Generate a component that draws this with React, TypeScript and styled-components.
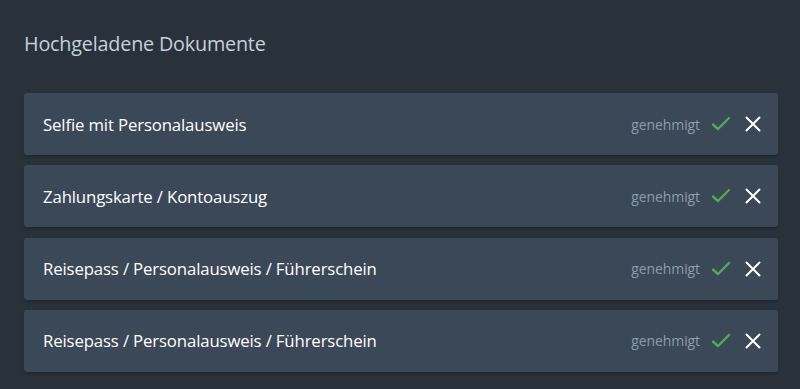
import React from "react";
import styled, { createGlobalStyle } from "styled-components";

const GlobalStyle = createGlobalStyle`
  html, body {
    margin: 0;
    padding: 0;
    background: #29313b;
  }
  body {
    font-family: "Open Sans", "Noto Sans", sans-serif;
  }
`;

const Page = styled.div`
  width: 800px;
  height: 389px;
  box-sizing: border-box;
  padding: 30px 22px 0 24px;
  background: #29313b;
`;

const Title = styled.h2`
  margin: 0 0 35px;
  font-weight: 400;
  font-size: 19.8px;
  line-height: 28px;
  color: #c5d0db;
  letter-spacing: -0.2px;
`;

const List = styled.div`
  display: flex;
  flex-direction: column;
  gap: 10.3px;
`;

const Row = styled.div`
  display: flex;
  align-items: center;
  height: 62px;
  padding: 0 17px 0 19px;
  background: #3b4857;
  border-radius: 3px;
  box-shadow: 0 2px 2px rgba(0, 0, 0, 0.18);
`;

const DocName = styled.span`
  flex: 1;
  font-size: 16.8px;
  color: #ffffff;
  letter-spacing: -0.15px;
`;

const Status = styled.span`
  font-size: 14px;
  color: #8d9cab;
  margin-right: 11px;
  letter-spacing: -0.1px;
`;

const IconButton = styled.span<{ $gap?: number; $size: number }>`
  display: inline-flex;
  align-items: center;
  justify-content: center;
  width: ${(p) => p.$size}px;
  height: 20px;
  margin-left: ${(p) => p.$gap ?? 0}px;
`;

const Check = () => (
  <svg width="20" height="20" viewBox="0 0 20 20">
    <path d="M2 10.5 L7 15 L18 4" fill="none" stroke="#4cae4f" strokeWidth="2.4" strokeLinecap="round" strokeLinejoin="round" />
  </svg>
);

const Cross = () => (
  <svg width="16" height="16" viewBox="0 0 16 16">
    <path d="M1.5 1.5 L14.5 14.5 M14.5 1.5 L1.5 14.5" fill="none" stroke="#ffffff" strokeWidth="2" strokeLinecap="round" />
  </svg>
);

const docs = [
  "Selfie mit Personalausweis",
  "Zahlungskarte / Kontoauszug",
  "Reisepass / Personalausweis / Führerschein",
  "Reisepass / Personalausweis / Führerschein",
];

export default function App() {
  return (
    <Page>
      <GlobalStyle />
      <Title>Hochgeladene Dokumente</Title>
      <List>
        {docs.map((d, i) => (
          <Row key={i}>
            <DocName>{d}</DocName>
            <Status>genehmigt</Status>
            <IconButton $size={20}>
              <Check />
            </IconButton>
            <IconButton $size={16} $gap={14}>
              <Cross />
            </IconButton>
          </Row>
        ))}
      </List>
    </Page>
  );
}
